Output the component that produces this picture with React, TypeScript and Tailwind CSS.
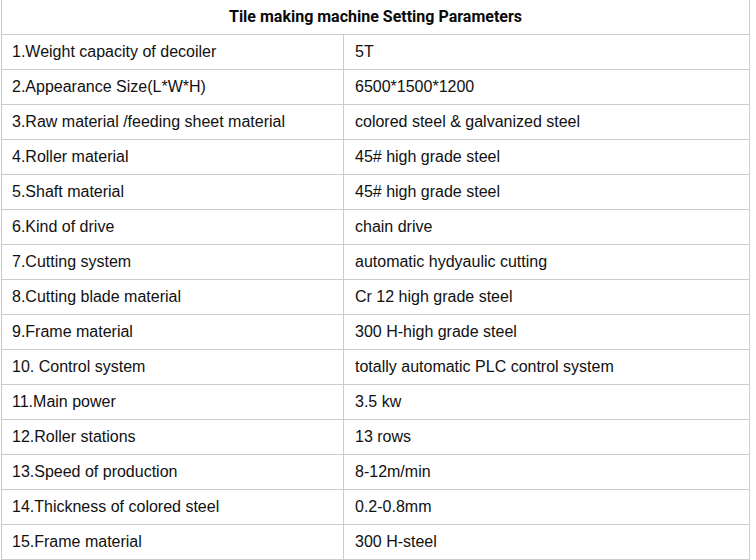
const rows: [string, string][] = [
  ["1.Weight capacity of decoiler", "5T"],
  ["2.Appearance Size(L*W*H)", "6500*1500*1200"],
  ["3.Raw material /feeding sheet material", "colored steel & galvanized steel"],
  ["4.Roller material", "45# high grade steel"],
  ["5.Shaft material", "45# high grade steel"],
  ["6.Kind of drive", "chain drive"],
  ["7.Cutting system", "automatic hydyaulic cutting"],
  ["8.Cutting blade material", "Cr 12 high grade steel"],
  ["9.Frame material", "300 H-high grade steel"],
  ["10. Control system", "totally automatic PLC control system"],
  ["11.Main power", "3.5 kw"],
  ["12.Roller stations", "13 rows"],
  ["13.Speed of production", "8-12m/min"],
  ["14.Thickness of colored steel", "0.2-0.8mm"],
  ["15.Frame material", "300 H-steel"],
];

export default function App() {
  return (
    <div className="w-[756px] h-[560px] bg-white overflow-hidden pl-px">
      <div className="w-[749px] border-x border-[#cccccc] text-[#111111]">
        <div className="h-[35px] border-b border-[#cccccc] flex items-center justify-center pb-px font-['Roboto',sans-serif] font-bold text-[16px] text-[#0a0a0a]">
          Tile making machine Setting Parameters
        </div>
        {rows.map(([k, v], i) => (
          <div
            key={i}
            className="grid grid-cols-[342px_1fr] h-[35px] border-b border-[#cccccc] font-['Liberation_Sans',Arial,sans-serif] text-[16px]"
          >
            <div className="border-r border-[#cccccc] pl-[10px] flex items-center">{k}</div>
            <div className="pl-[11px] flex items-center">{v}</div>
          </div>
        ))}
      </div>
    </div>
  );
}
